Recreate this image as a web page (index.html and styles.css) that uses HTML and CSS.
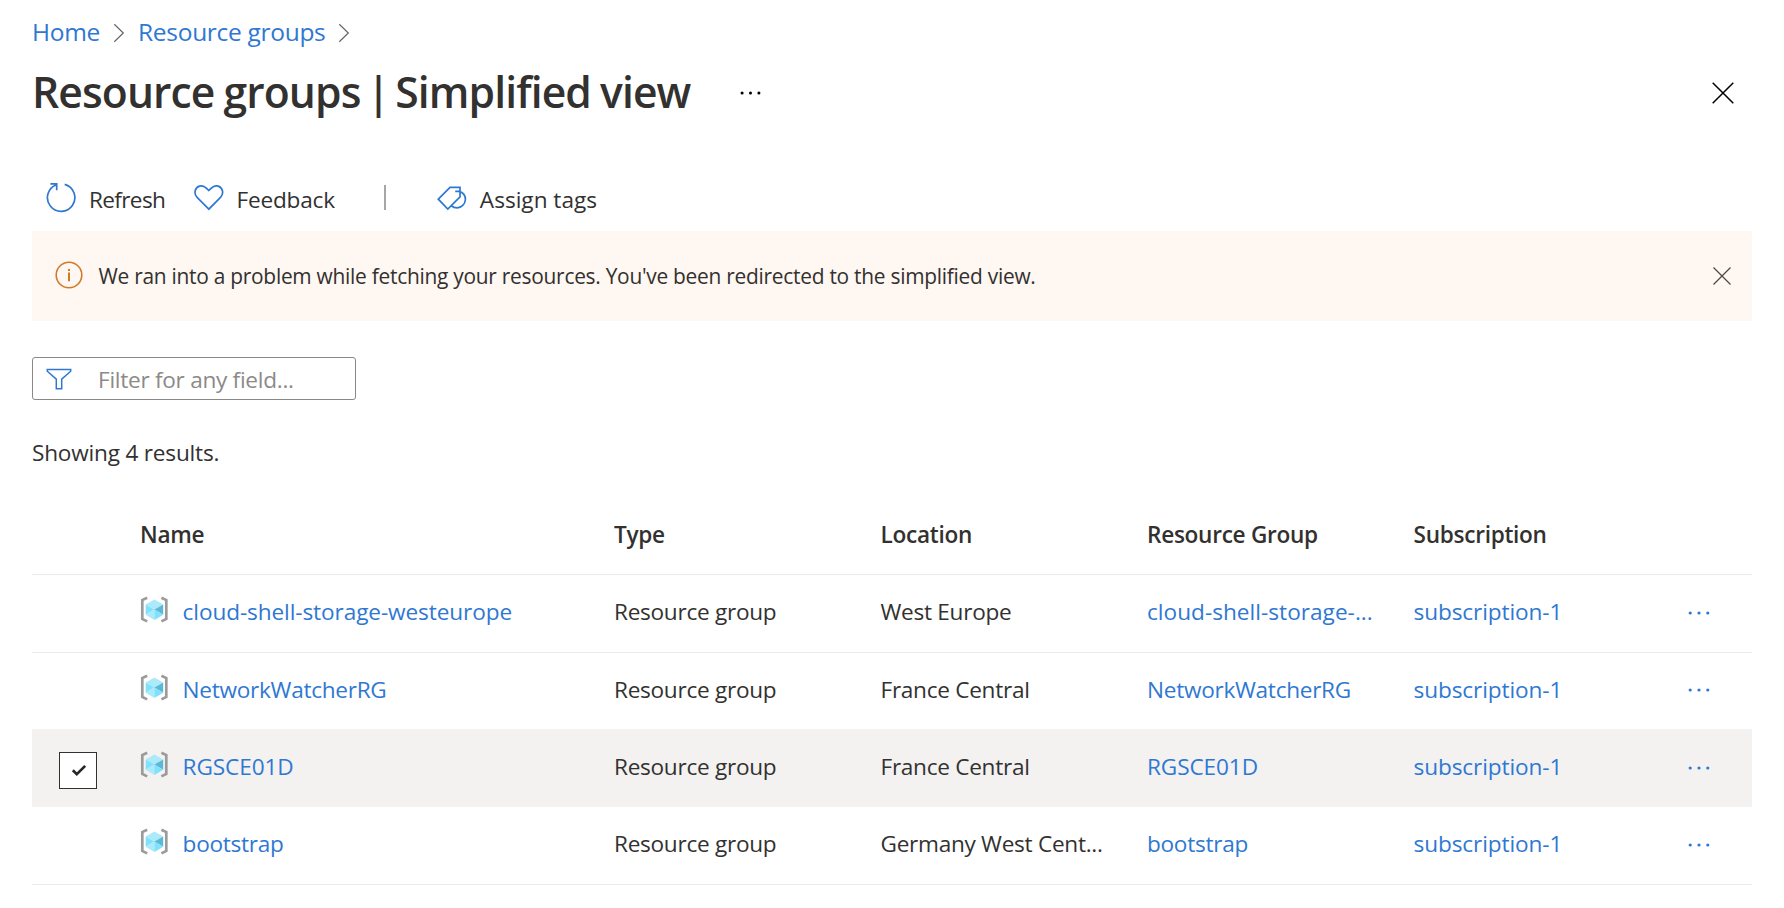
FILE: index.html
```html
<!DOCTYPE html>
<html lang="en">
<head>
<meta charset="utf-8">
<title>Resource groups | Simplified view</title>
<link rel="stylesheet" href="styles.css">
</head>
<body>
<svg class="defs" width="0" height="0">
  <symbol id="rg" viewBox="0 0 28.6 27">
    <path d="M7.2 1.7 2.3 4V22.9L7.2 25.4M21.4 1.7 26.3 4V22.9L21.4 25.4" fill="none" stroke="#9b9b9b" stroke-width="2.7"/>
    <path d="M14.4 3.6 23.2 8.4 14.4 13.4 5.7 8.4Z" fill="#abe9fb"/>
    <path d="M5.7 8.4 14.4 13.4 5.7 18.7Z" fill="#7fe1fb"/>
    <path d="M23.2 8.4V18.7L14.4 13.4Z" fill="#5db8d6"/>
    <path d="M5.7 18.7 14.4 13.4V24Z" fill="#abe9fb"/>
    <path d="M23.2 18.7 14.4 13.4V24Z" fill="#7fe1fb"/>
  </symbol>
  <symbol id="dots" viewBox="0 0 22 4">
    <circle cx="2.2" cy="2" r="1.6"/><circle cx="11" cy="2" r="1.6"/><circle cx="19.8" cy="2" r="1.6"/>
  </symbol>
  <symbol id="chev" viewBox="0 0 12 20"><path d="M1.3 1.3 10.3 10 1.3 18.7" fill="none" stroke="#666" stroke-width="1.2"/></symbol>
</svg>

<nav class="crumbs">
  <a class="home">Home</a><svg class="chev"><use href="#chev"/></svg>
  <a>Resource groups</a><svg class="chev"><use href="#chev"/></svg>
</nav>

<header class="title-bar">
  <h1>Resource groups <span class="bar">|</span> Simplified view</h1>
  <svg class="title-dots"><use href="#dots"/></svg>
  <svg class="close" width="24" height="24" viewBox="0 0 24 24"><path d="M1.7 1.7 22.3 22.3M22.3 1.7 1.7 22.3" stroke="#000" stroke-width="1.5"/></svg>
</header>

<div class="toolbar">
  <div class="cmd cmd-refresh">
    <svg width="32" height="32" viewBox="0 0 32 32"><path d="M19.7 2.4A13.7 13.7 0 1 1 11.6 2.7M5.4 1.9H11.7V8.2" /></svg>
    <span>Refresh</span>
  </div>
  <div class="cmd cmd-feedback">
    <svg width="30" height="27" viewBox="0 0 30 27"><path d="M14.8 25.2 3.1 13.3C-.7 9.4 1 3.6 5.4 2.1 9 1 11.6 3 14.8 6.5 18 3 20.6 1 24.2 2.1 28.6 3.6 30.3 9.4 26.5 13.3Z"/></svg>
    <span>Feedback</span>
  </div>
  <i class="sep"></i>
  <div class="cmd cmd-tags">
    <svg width="30" height="25" viewBox="0 0 30 25"><path d="M1.3 13.2 13 1.4H23V10.9L10.8 23ZM18.2 5.4H22.5C26.3 6.8 28.6 10 28.4 13.8 28.1 18.2 24.4 21.8 20.2 21.8 18 21.8 16 21.2 14.6 20"/></svg>
    <span>Assign tags</span>
  </div>
</div>

<div class="banner">
  <svg class="info" width="28" height="28" viewBox="0 0 28 28"><circle cx="14" cy="14" r="12.8" fill="none" stroke="#d27a2c" stroke-width="1.6"/><path d="M14 11.5V20.2M14 8V10" stroke="#d27a2c" stroke-width="2"/></svg>
  <span>We ran into a problem while fetching your resources. You've been redirected to the simplified view.</span>
  <svg class="close" width="20" height="20" viewBox="0 0 20 20"><path d="M1.5 1.5 18.5 18.5M18.5 1.5 1.5 18.5" stroke="#4a4846" stroke-width="1.2"/></svg>
</div>

<div class="filter">
  <svg width="26" height="22" viewBox="0 0 26 22"><path d="M1.3 1.5H24.7V3.2L15.7 11.2V20.8H10.3V11.2L1.3 3.2Z" fill="none" stroke="#2f78d2" stroke-width="1.5"/></svg>
  <span>Filter for any field...</span>
</div>

<p class="count">Showing 4 results.</p>

<div class="grid">
  <div class="row head">
    <span></span><span>Name</span><span>Type</span><span>Location</span><span>Resource Group</span><span>Subscription</span>
  </div>
  <div class="row">
    <span></span>
    <span class="name"><svg class="rg"><use href="#rg"/></svg><a class="wide">cloud-shell-storage-westeurope</a></span>
    <span>Resource group</span><span>West Europe</span><a class="wider">cloud-shell-storage-...</a><a class="wide">subscription-1</a>
    <svg class="more"><use href="#dots"/></svg>
  </div>
  <div class="row second">
    <span></span>
    <span class="name"><svg class="rg"><use href="#rg"/></svg><a>NetworkWatcherRG</a></span>
    <span>Resource group</span><span>France Central</span><a>NetworkWatcherRG</a><a class="wide">subscription-1</a>
    <svg class="more"><use href="#dots"/></svg>
  </div>
  <div class="row selected">
    <span class="check"><svg width="16" height="13" viewBox="0 0 16 13"><path d="M1.8 6.2 5.8 10.2 14.2 1.9" fill="none" stroke="#292827" stroke-width="2.7"/></svg></span>
    <span class="name"><svg class="rg"><use href="#rg"/></svg><a class="wide">RGSCE01D</a></span>
    <span>Resource group</span><span>France Central</span><a class="wide">RGSCE01D</a><a class="wide">subscription-1</a>
    <svg class="more"><use href="#dots"/></svg>
  </div>
  <div class="row">
    <span></span>
    <span class="name"><svg class="rg"><use href="#rg"/></svg><a>bootstrap</a></span>
    <span>Resource group</span><span>Germany West Cent...</span><a>bootstrap</a><a class="wide">subscription-1</a>
    <svg class="more"><use href="#dots"/></svg>
  </div>
</div>
</body>
</html>
```
FILE: styles.css
```css
* { box-sizing: border-box; }
body {
  margin: 0;
  padding: 0 32px;
  height: 908px;
  overflow: hidden;
  background: #fff;
  color: #323130;
  font: 400 22.6px/30px "Open Sans", "Noto Sans", sans-serif;
  letter-spacing: -0.28px;
  white-space: nowrap;
}
svg { display: block; flex: none; }
.defs { position: absolute; }
a { color: #2f78d2; }

.crumbs {
  display: flex;
  align-items: center;
  height: 63px;
  font-size: 24.5px;
  letter-spacing: -0.3px;
}
.chev { width: 12px; height: 20px; margin: 3px 13.5px 0 12.5px; }

.title-bar { display: flex; align-items: center; height: 57px; }
.title-bar h1 {
  width: 662px;
  margin: 0;
  font-size: 42.6px;
  line-height: 57px;
  font-weight: 600;
  letter-spacing: -0.9px;
  word-spacing: -1px;
}
.bar { margin: 0 -3px; }
.title-dots { width: 21px; height: 4px; margin: 3px 0 0 46px; }
.title-bar .close { margin: 3px 17px 0 auto; }

.toolbar {
  display: flex;
  align-items: center;
  height: 63px;
  margin-top: 48px;
  padding-left: 13px;
}
.cmd { display: flex; align-items: center; letter-spacing: 0; }
.cmd svg { fill: none; stroke: #2f78d2; stroke-width: 1.7; margin-bottom: 3px; }
.cmd-refresh { width: 121px; letter-spacing: -0.65px; }
.cmd-refresh span { margin-left: 12px; }
.cmd-feedback { margin-left: 28px; letter-spacing: -0.2px; }
.cmd-feedback svg { margin-bottom: 4px; }
.cmd-feedback span { margin-left: 12.5px; }
.cmd-tags span { margin-left: 13px; }
.sep { width: 2px; height: 25px; margin: 0 51px 4px 49px; background: #a6a6a6; }

.banner {
  display: flex;
  align-items: center;
  height: 90px;
  padding: 0 20px 0 23px;
  background: #fff7f1;
  font-size: 20.9px;
  letter-spacing: -0.26px;
}
.info { margin: 0 15.5px 3px 0; }
.banner .close { margin-left: auto; }

.filter {
  display: flex;
  align-items: center;
  width: 324px;
  height: 43px;
  margin-top: 36px;
  padding-left: 13px;
  border: 1px solid #8a8886;
  border-radius: 3px;
  color: #8c8a88;
}
.filter span { margin: 3px 0 0 26px; }
.count { margin: 38px 0 0; letter-spacing: -0.2px; }

.grid { margin-top: 27px; }
.row {
  display: grid;
  grid-template-columns: 108px 474px 266.5px 266.5px 266.5px 274.5px 1fr;
  align-items: center;
  height: 78px;
  padding-bottom: 3px;
  border-bottom: 1px solid #edebe9;
}
.head { height: 80px; padding: 1px 0 0; font-weight: 600; letter-spacing: -0.28px; }
.second { height: 76px; border-bottom: 0; }
.selected { padding-bottom: 2px; border-bottom: 0; background: #f3f2f1; }
.name { display: flex; align-items: center; }
.wide { letter-spacing: -0.1px; }
.wider { letter-spacing: 0.02px; }
.rg { width: 28.6px; height: 27px; margin: 0 14px 5px 0; }
.more { width: 22px; height: 4px; margin-top: 1px; fill: #2f78d2; }
.check {
  display: flex;
  align-items: center;
  justify-content: center;
  width: 38px;
  height: 37px;
  margin: 6px 0 0 27px;
  padding-left: 1px;
  border: 1px solid #323130;
  background: #fff;
}
```
